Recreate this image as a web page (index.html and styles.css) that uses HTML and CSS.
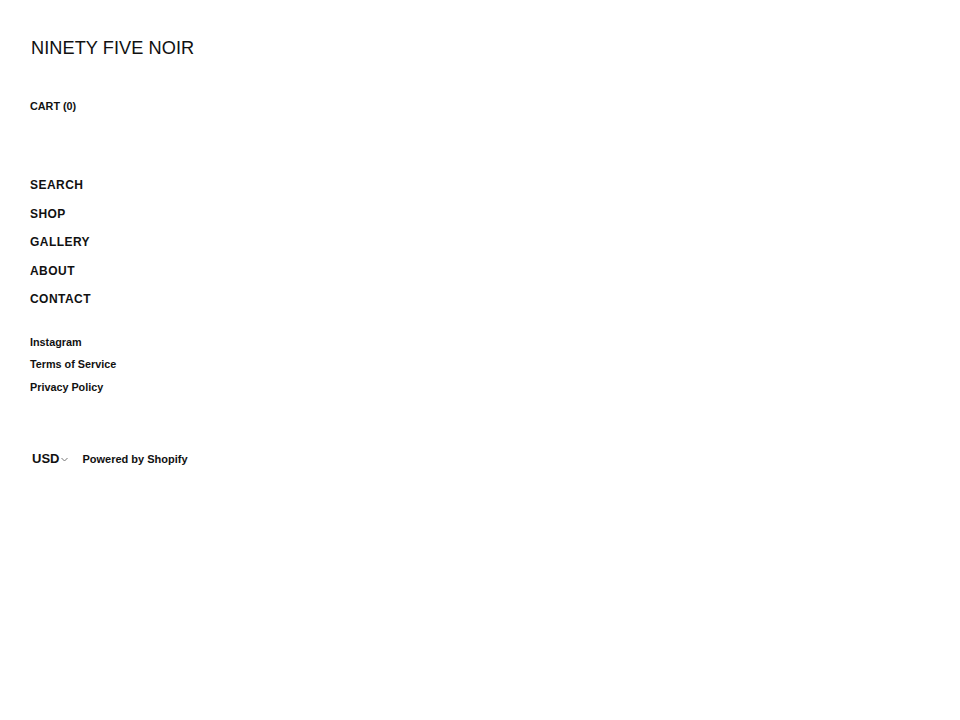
FILE: index.html
```html
<!DOCTYPE html>
<html>
<head>
<meta charset="utf-8">
<link rel="stylesheet" href="styles.css">
</head>
<body>
<div class="sidebar">
  <a class="logo" href="#">NINETY FIVE NOIR</a>
  <a class="cart" href="#">CART (0)</a>
  <nav class="nav">
    <a href="#">SEARCH</a>
    <a href="#">SHOP</a>
    <a href="#">GALLERY</a>
    <a href="#">ABOUT</a>
    <a href="#">CONTACT</a>
  </nav>
  <div class="links">
    <a href="#">Instagram</a>
    <a href="#">Terms of Service</a>
    <a href="#">Privacy Policy</a>
  </div>
  <div class="bottom">
    <span class="currency">USD<svg class="chev" width="7" height="5" viewBox="0 0 7 5"><path d="M0.5 1 L3.5 4 L6.5 1" fill="none" stroke="#777" stroke-width="1"/></svg></span>
    <a class="powered" href="#">Powered by Shopify</a>
  </div>
</div>
</body>
</html>
```
FILE: styles.css
```css
html, body {
  margin: 0;
  padding: 0;
  background: #fff;
}
body {
  font-family: "Liberation Sans", Arial, Helvetica, sans-serif;
  color: #111;
}
a {
  color: #111;
  text-decoration: none;
}
.sidebar {
  display: flex;
  flex-direction: column;
  align-items: flex-start;
  padding: 37px 30px 0 30px;
}
.logo {
  font-size: 18.2px;
  letter-spacing: 0.05px;
  line-height: 22px;
  margin-left: 1px;
}
.cart {
  margin-top: 40px;
  font-size: 10.8px;
  font-weight: bold;
  line-height: 14px;
}
.nav {
  margin-top: 58px;
  display: flex;
  flex-direction: column;
}
.nav a {
  font-size: 12px;
  font-weight: bold;
  letter-spacing: 0.45px;
  line-height: 28.5px;
}
.links {
  margin-top: 17px;
  display: flex;
  flex-direction: column;
}
.links a {
  font-size: 10.8px;
  font-weight: bold;
  line-height: 22.5px;
}
.bottom {
  margin-top: 53px;
  display: flex;
  align-items: center;
  gap: 14px;
  margin-left: 2px;
}
.currency {
  font-size: 13px;
  font-weight: bold;
  display: flex;
  align-items: center;
  gap: 2px;
}
.chev {
  margin-top: 1px;
}
.powered {
  font-size: 11px;
  font-weight: bold;
}
```
